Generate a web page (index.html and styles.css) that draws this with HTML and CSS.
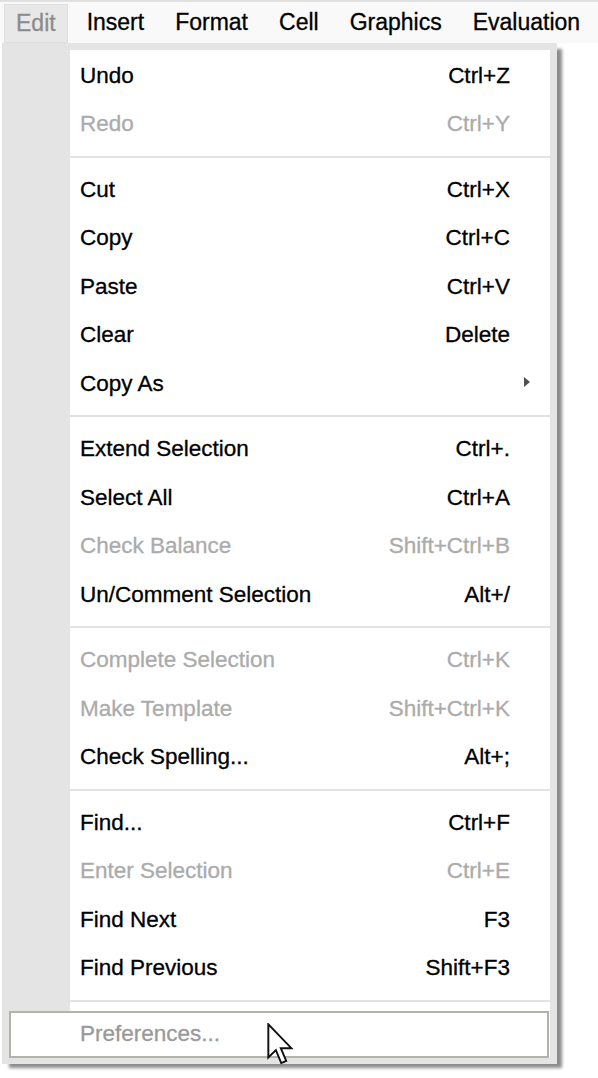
FILE: index.html
```html
<!DOCTYPE html>
<html>
<head>
<meta charset="utf-8">
<link rel="stylesheet" href="styles.css">
</head>
<body>
<div class="menubar">
  <span class="mb-item active">Edit</span>
  <span class="mb-item">Insert</span>
  <span class="mb-item">Format</span>
  <span class="mb-item">Cell</span>
  <span class="mb-item">Graphics</span>
  <span class="mb-item">Evaluation</span>
</div>
<div class="dropdown">
  <div class="panel">
    <div class="row"><span class="gutter"></span><span class="content"><span>Undo</span><span>Ctrl+Z</span></span></div>
    <div class="row disabled"><span class="gutter"></span><span class="content"><span>Redo</span><span>Ctrl+Y</span></span></div>
    <div class="sep"></div>
    <div class="row"><span class="gutter"></span><span class="content"><span>Cut</span><span>Ctrl+X</span></span></div>
    <div class="row"><span class="gutter"></span><span class="content"><span>Copy</span><span>Ctrl+C</span></span></div>
    <div class="row"><span class="gutter"></span><span class="content"><span>Paste</span><span>Ctrl+V</span></span></div>
    <div class="row"><span class="gutter"></span><span class="content"><span>Clear</span><span>Delete</span></span></div>
    <div class="row"><span class="gutter"></span><span class="content"><span>Copy As</span><span class="sub"></span></span></div>
    <div class="sep"></div>
    <div class="row"><span class="gutter"></span><span class="content"><span>Extend Selection</span><span>Ctrl+.</span></span></div>
    <div class="row"><span class="gutter"></span><span class="content"><span>Select All</span><span>Ctrl+A</span></span></div>
    <div class="row disabled"><span class="gutter"></span><span class="content"><span>Check Balance</span><span>Shift+Ctrl+B</span></span></div>
    <div class="row"><span class="gutter"></span><span class="content"><span>Un/Comment Selection</span><span>Alt+/</span></span></div>
    <div class="sep"></div>
    <div class="row disabled"><span class="gutter"></span><span class="content"><span>Complete Selection</span><span>Ctrl+K</span></span></div>
    <div class="row disabled"><span class="gutter"></span><span class="content"><span>Make Template</span><span>Shift+Ctrl+K</span></span></div>
    <div class="row"><span class="gutter"></span><span class="content"><span>Check Spelling...</span><span>Alt+;</span></span></div>
    <div class="sep"></div>
    <div class="row"><span class="gutter"></span><span class="content"><span>Find...</span><span>Ctrl+F</span></span></div>
    <div class="row disabled"><span class="gutter"></span><span class="content"><span>Enter Selection</span><span>Ctrl+E</span></span></div>
    <div class="row"><span class="gutter"></span><span class="content"><span>Find Next</span><span>F3</span></span></div>
    <div class="row"><span class="gutter"></span><span class="content"><span>Find Previous</span><span>Shift+F3</span></span></div>
    <div class="sep"></div>
    <div class="row hl"><span class="gutter"></span><span class="content"><span>Preferences...</span><span></span></span></div>
  </div>
  <svg class="cursor" width="27" height="42" viewBox="0 0 12.5 19.5">
    <path d="M0.6 0.6 V16 L4.1 12.6 L6.6 18.6 L8.9 17.6 L6.4 11.7 H11.3 Z" fill="#fff" stroke="#111" stroke-width="0.9" stroke-linejoin="miter"/>
  </svg>
</div>
</body>
</html>
```

FILE: styles.css
```css
html, body {
  margin: 0;
  padding: 0;
  background: #ffffff;
}

body {
  font-family: "Liberation Sans", Arial, sans-serif;
  width: 598px;
  height: 1078px;
  position: relative;
  overflow: hidden;
}

.menubar {
  border-top: 2px solid #e0e0e0;
  height: 41px;
  background: #f9f9f9;
  display: flex;
  align-items: stretch;
  gap: 7px;
  padding-left: 4px;
  font-size: 23px;
  color: #000;
  -webkit-text-stroke: 0.3px currentColor;
}

.mb-item {
  display: flex;
  align-items: center;
  padding: 0 12px;
  white-space: nowrap;
}

.mb-item.active {
  margin-top: 2px;
  background: #e8e8e8;
  box-shadow: inset 0 0 0 1px #dedede;
  color: #8c8c8c;
}

.dropdown {
  position: absolute;
  left: 2px;
  top: 43px;
  width: 541px;
  padding: 7px 7px 6px 7px;
  background: #e4e4e4;
  box-shadow: 6px 5px 3px -1px rgba(0, 0, 0, 0.45);
  font-size: 22.5px;
  -webkit-text-stroke: 0.3px currentColor;
}

.panel {
  background: linear-gradient(to right, transparent 61px, #ffffff 61px);
  padding-top: 1.5px;
}

.row {
  display: flex;
  height: 48.5px;
  color: #000;
}

.row.disabled {
  color: #ababab;
}

.gutter {
  width: 61px;
  flex: none;
}

.content {
  flex: 1;
  display: flex;
  align-items: center;
  justify-content: space-between;
  padding: 0 40px 0 10px;
  white-space: nowrap;
}

.sub {
  width: 0;
  height: 0;
  border-left: 6px solid #505050;
  border-top: 5px solid transparent;
  border-bottom: 5px solid transparent;
  margin-right: -20px;
  margin-top: -3px;
}

.sep {
  height: 17px;
  display: flex;
  align-items: center;
  padding-left: 61px;
}

.sep::after {
  content: "";
  flex: 1;
  height: 2px;
  margin-top: -1px;
  background: #e2e2e2;
}

.row.hl {
  margin-top: 1px;
  height: 47px;
  margin-right: 1px;
  box-sizing: border-box;
  border: 2px solid #b3b3ab;
  background: #ffffff;
  color: #999999;
}

.row.hl .gutter {
  width: 59px;
}

.row.hl .content {
  padding-right: 37px;
}

.cursor {
  position: absolute;
  left: 265px;
  top: 980px;
}
```
